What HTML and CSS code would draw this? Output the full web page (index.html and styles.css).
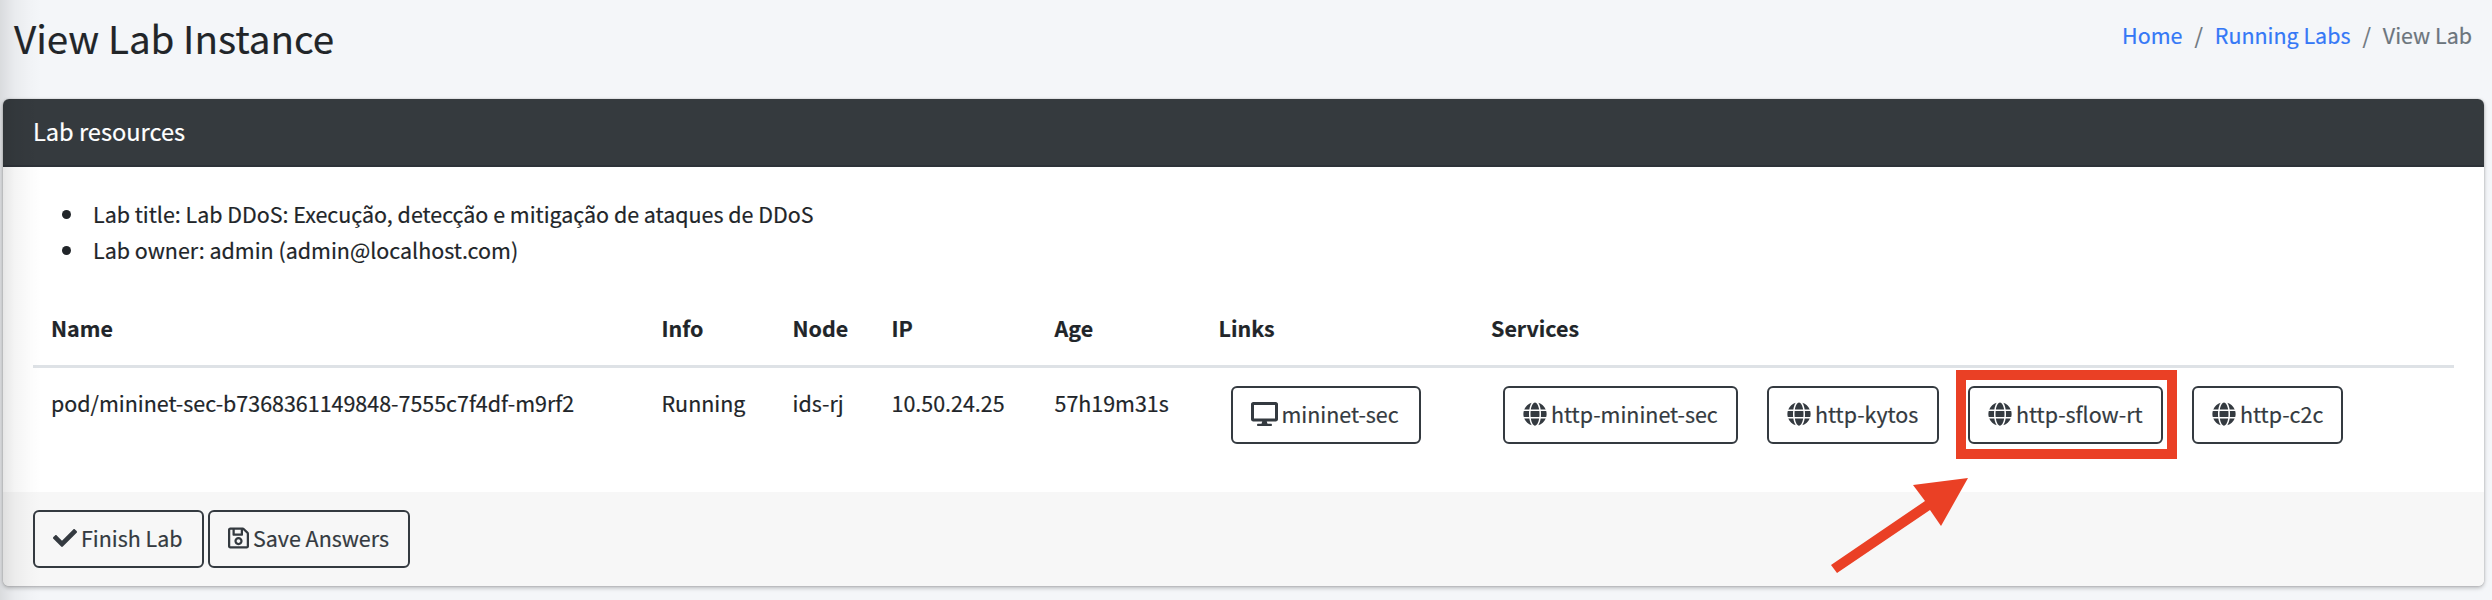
FILE: index.html
```html
<!DOCTYPE html>
<html lang="en">
<head>
<meta charset="utf-8">
<title>View Lab Instance</title>
<link rel="stylesheet" href="styles.css">
</head>
<body>
<svg class="sprite" aria-hidden="true">
  <symbol id="globe" viewBox="0 0 496 512"><path fill="currentColor" d="M336.500 160C322 70.700 287.800 8 248 8s-74 62.700-88.500 152h177zM152 256c0 22.200 1.200 43.500 3.300 64h185.300c2.100-20.500 3.300-41.800 3.300-64s-1.200-43.500-3.300-64H155.300c-2.100 20.500-3.300 41.800-3.300 64zm324.700-96c-28.600-67.900-86.500-120.400-158-141.600 24.400 33.800 41.200 84.700 50 141.600h108zM177.200 18.400C105.800 39.600 47.800 92.100 19.300 160h108c8.700-56.900 25.500-107.800 49.900-141.600zM487.400 192H372.700c2.100 21 3.300 42.500 3.300 64s-1.200 43-3.300 64h114.600c5.500-20.500 8.600-41.800 8.600-64s-3.100-43.500-8.500-64zM120 256c0-21.500 1.200-43 3.300-64H8.600C3.200 212.500 0 233.800 0 256s3.200 43.500 8.600 64h114.600c-2-21-3.200-42.500-3.200-64zm39.500 96c14.500 89.300 48.700 152 88.500 152s74-62.700 88.500-152h-177zm159.300 141.600c71.400-21.200 129.400-73.700 158-141.600h-108c-8.800 56.900-25.600 107.800-50 141.600zM19.300 352c28.600 67.900 86.500 120.400 158 141.600-24.400-33.800-41.200-84.700-50-141.600h-108z"/></symbol>
  <symbol id="desktop" viewBox="0 0 576 512"><path fill="currentColor" d="M528 0H48C21.500 0 0 21.500 0 48v320c0 26.500 21.500 48 48 48h192l-16 48h-72c-13.300 0-24 10.700-24 24s10.700 24 24 24h272c13.300 0 24-10.700 24-24s-10.700-24-24-24h-72l-16-48h192c26.500 0 48-21.500 48-48V48c0-26.500-21.500-48-48-48zm-16 352H64V64h448v288z"/></symbol>
  <symbol id="check" viewBox="0 0 512 512"><path fill="currentColor" d="M173.900 439.400L7.500 273c-10-10-10-26.200 0-36.200l36.200-36.200c10-10 26.200-10 36.200 0L192 312.700 432.100 72.600c10-10 26.200-10 36.200 0l36.200 36.200c10 10 10 26.200 0 36.200L210.100 439.400c-10 10-26.200 10-36.200 0z"/></symbol>
  <symbol id="save" viewBox="0 0 448 512"><path fill="currentColor" d="M433.900 129.900l-83.800-83.800A48 48 0 0 0 316.100 32H48C21.500 32 0 53.500 0 80v352c0 26.500 21.500 48 48 48h352c26.500 0 48-21.500 48-48V163.900a48 48 0 0 0-14.100-34zM272 80v80H144V80h128zm122 352H54a6 6 0 0 1-6-6V86a6 6 0 0 1 6-6h42v104c0 13.300 10.700 24 24 24h176c13.300 0 24-10.700 24-24V83.900l78.200 78.200a6 6 0 0 1 1.800 4.200V426a6 6 0 0 1-6 6zM224 232c-48.500 0-88 39.500-88 88s39.500 88 88 88 88-39.500 88-88-39.500-88-88-88zm0 128c-22.100 0-40-17.900-40-40s17.900-40 40-40 40 17.900 40 40-17.900 40-40 40z"/></symbol>
</svg>
<div class="page">
  <header class="page-header">
    <h1 class="title">View Lab Instance</h1>
    <nav class="breadcrumb">
      <a href="#">Home</a><span class="sep">/</span><a href="#">Running Labs</a><span class="sep">/</span><span>View Lab</span>
    </nav>
  </header>
  <section class="card">
    <div class="card-header">Lab resources</div>
    <div class="card-body">
      <ul class="details">
        <li>Lab title: Lab DDoS: Execução, detecção e mitigação de ataques de DDoS</li>
        <li>Lab owner: admin (admin@localhost.com)</li>
      </ul>
      <div class="table">
        <div class="row head">
          <span>Name</span><span>Info</span><span>Node</span><span>IP</span><span>Age</span><span>Links</span><span>Services</span>
        </div>
        <div class="row">
          <span class="cell">pod/mininet-sec-b7368361149848-7555c7f4df-m9rf2</span><span class="cell">Running</span><span class="cell">ids-rj</span><span class="cell">10.50.24.25</span><span class="cell">57h19m31s</span>
          <div class="links"><button class="btn w-links"><svg class="icon-desktop"><use href="#desktop"/></svg>mininet-sec</button></div>
          <div class="links">
            <button class="btn w-mininet"><svg class="icon-globe"><use href="#globe"/></svg>http-mininet-sec</button>
            <button class="btn w-kytos"><svg class="icon-globe"><use href="#globe"/></svg>http-kytos</button>
            <button class="btn w-sflow"><svg class="icon-globe"><use href="#globe"/></svg>http-sflow-rt</button>
            <button class="btn w-c2c"><svg class="icon-globe"><use href="#globe"/></svg>http-c2c</button>
          </div>
        </div>
      </div>
    </div>
    <footer class="card-footer">
      <button class="btn w-finish"><svg class="icon-check"><use href="#check"/></svg>Finish Lab</button>
      <button class="btn w-save"><svg class="icon-save"><use href="#save"/></svg>Save Answers</button>
    </footer>
  </section>
  <div class="edge-shadow"></div>
  <div class="highlight"></div>
  <svg class="arrow" viewBox="0 0 140 98"><path fill="#ea4025" d="M138 0 83 7 95 23 1 87 7 95 100 32 111 48z"/></svg>
</div>
</body>
</html>
```
FILE: styles.css
```css
* { box-sizing: border-box; }
body {
  margin: 0;
  background: #f4f6f9;
  color: #212529;
  font: 21.45px/36px "Noto Sans CJK JP", "Open Sans", sans-serif;
  -webkit-text-stroke: .2px;
}
.sprite { display: none; }
.page { position: relative; height: 600px; overflow: hidden; padding: 0 8px 0 3px; }
.page-header {
  display: flex;
  justify-content: space-between;
  height: 99px;
  padding: 11px 12px 0 11px;
}
.title { margin: 0; font-size: 38.6px; line-height: 52px; font-weight: 400; }
.breadcrumb { display: flex; padding-top: 6px; color: #6c757d; }
.breadcrumb a { color: #3478f6; text-decoration: none; }
.sep { padding: 0 12px; }
.card {
  height: 487px;
  border-radius: 6px;
  background: #fff;
  box-shadow: 0 0 2px rgba(0,0,0,.2), 0 2px 4px rgba(0,0,0,.25);
}
.card-header {
  height: 68px;
  padding: 14px 30px;
  border-bottom: 2px solid #2d3238;
  border-radius: 6px 6px 0 0;
  background: #353a3e;
  color: #fff;
  font-size: 23.6px;
}
.card-body { height: 325px; padding: 29px 30px 0; }
.details { margin: 0; padding: 0 0 0 29px; list-style: none; }
.details li { display: flex; align-items: center; gap: 22px; }
.details li::before { content: ""; width: 9px; height: 9px; border-radius: 50%; background: #212529; }
.table { margin-top: 25px; }
.row {
  display: grid;
  grid-template-columns: 610.500px 131px 99px 163px 164px 272.500px 1fr;
  padding: 18px 0 0 18px;
}
.row.head { height: 75px; border-bottom: 3px solid #dee2e6; padding-top: 17px; font-weight: 700; }
.cell { margin-top: -1px; }
.links { display: flex; gap: 29px; padding-left: 12px; }
.btn {
  display: flex;
  align-items: center;
  height: 58px;
  padding: 0 0 2px 18px;
  border: 2px solid #343a40;
  border-radius: 6px;
  background: transparent;
  color: #343a40;
  font: inherit;
  white-space: nowrap;
}
.w-links { width: 190px; }
.w-mininet { width: 235px; }
.w-kytos { width: 172px; }
.w-sflow { width: 195px; }
.w-c2c { width: 151px; }
.w-finish { width: 171px; }
.w-save { width: 202px; }
.btn svg { flex: none; height: 24px; margin-right: 4px; }
.icon-desktop { width: 27px; }
.icon-globe { width: 24px; }
.icon-check { width: 24px; }
.icon-save { width: 21px; }
.card-footer {
  display: flex;
  gap: 4px;
  height: 94px;
  padding: 18px 30px;
  border-radius: 0 0 6px 6px;
  background: #f7f7f7;
}
.edge-shadow {
  position: absolute;
  inset: 0 auto 0 0;
  width: 42px;
  background: linear-gradient(90deg, rgba(0,0,0,.11), rgba(0,0,0,.045) 35%, rgba(0,0,0,.012) 75%, transparent);
}
.highlight { position: absolute; left: 1956px; top: 370px; width: 221px; height: 89px; border: 10px solid #ea4025; }
.arrow { position: absolute; left: 1830px; top: 478px; width: 140px; height: 98px; }
```
